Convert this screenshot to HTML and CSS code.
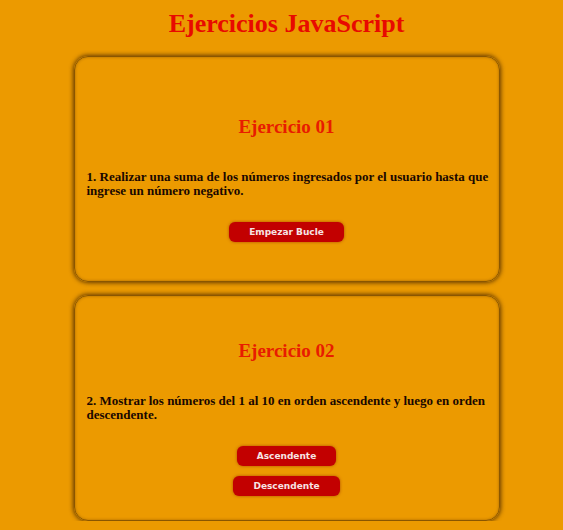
FILE: index.html
```html
<!DOCTYPE html>
<html lang="es">
<head>
<meta charset="utf-8">
<title>Ejercicios JavaScript</title>
<link rel="stylesheet" href="styles.css">
</head>
<body>
<h1 class="title">Ejercicios JavaScript</h1>
<main class="list">
  <section class="card">
    <h2 class="card-title">Ejercicio 01</h2>
    <p class="card-text">1. Realizar una suma de los números ingresados por el usuario hasta que ingrese un número negativo.</p>
    <div class="actions">
      <button class="btn">Empezar Bucle</button>
    </div>
  </section>
  <section class="card">
    <h2 class="card-title">Ejercicio 02</h2>
    <p class="card-text">2. Mostrar los números del 1 al 10 en orden ascendente y luego en orden descendente.</p>
    <div class="actions">
      <button class="btn">Ascendente</button>
      <button class="btn">Descendente</button>
    </div>
  </section>
</main>
</body>
</html>
```
FILE: styles.css
```css
html, body {
  margin: 0;
  background: #ec9a00;
}
body {
  padding: 0 0 0 10px;
  font-family: "Liberation Serif", "Times New Roman", serif;
}
.title {
  margin: 0;
  padding-top: 9px;
  text-align: center;
  color: #e80a00;
  font-size: 26px;
  line-height: 30px;
  font-weight: bold;
}
.list {
  display: flex;
  flex-direction: column;
  align-items: center;
  gap: 13px;
  margin-top: 17px;
}
.card {
  box-sizing: border-box;
  width: 426px;
  height: 226px;
  border: 1px solid #8a5600;
  border-radius: 14px;
  box-shadow: 0 0 4px 1px rgba(60, 30, 0, 0.75), inset 0 0 3px rgba(80, 40, 0, 0.45);
  padding: 18px 9px 0 9px;
  display: flex;
  flex-direction: column;
  justify-content: center;
}
.card-title {
  margin: 0;
  text-align: center;
  color: #e81c00;
  font-size: 19px;
  line-height: 24px;
  font-weight: bold;
}
.card-text {
  margin: 31px 0 0 3px;
  color: #1a0800;
  font-size: 13px;
  line-height: 14px;
  font-weight: bold;
}
.actions {
  display: flex;
  flex-direction: column;
  align-items: center;
  gap: 10px;
  margin-top: 24px;
}
.btn {
  font-family: "DejaVu Sans", Tahoma, Verdana, sans-serif;
  font-size: 9px;
  font-weight: bold;
  color: #f6e4e4;
  background: #c20000;
  border: none;
  border-radius: 6px;
  height: 20px;
  padding: 0 20px;
  box-shadow: 0 0 3px rgba(150, 40, 0, 0.7);
  cursor: pointer;
}
```
